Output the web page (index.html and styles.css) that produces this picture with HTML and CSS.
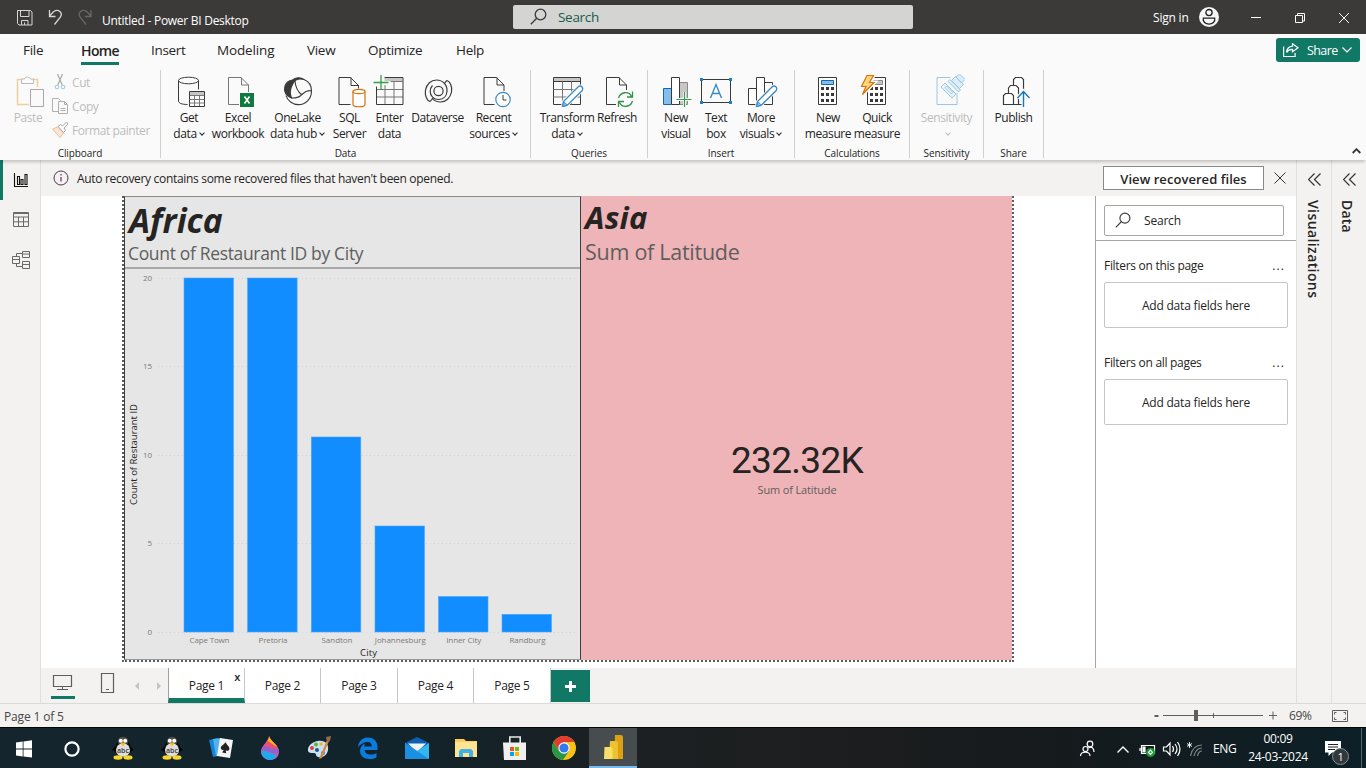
FILE: index.html
```html
<!DOCTYPE html>
<html lang="en">
<head>
<meta charset="utf-8">
<title>Untitled - Power BI Desktop</title>
<link rel="stylesheet" href="styles.css">
</head>
<body>
<header class="titlebar">
  <svg class="quick" width="96" height="34" viewBox="0 0 96 34" fill="none" stroke="#d6d6d4">
    <path d="M17.500 10.500h13l1.500 1.500v13h-13l-1.500-1.500zM20.500 10.500v6h8.500v-6M21.500 25v-4.500h6.500V25M24.500 22.500v2.500"/>
    <path d="M49.500 10v6.500h6M49.500 16l4-4.200c5-3.500 9.500 1 7 5.200l-6 7.500" stroke-width="1.300"/>
    <path d="M91 10v6.500h-6M91 16l-4-4.200c-5-3.500-9.500 1-7 5.200l6 7.500" stroke="#686765" stroke-width="1.300"/>
  </svg>
  <span class="doc-title">Untitled - Power BI Desktop</span>
  <div class="top-search">
    <svg width="18" height="18" viewBox="0 0 18 18" fill="none" stroke="#3b3a38" stroke-width="1.300"><circle cx="10.500" cy="6.500" r="5.300"/><path d="M6.700 10.300L.8 16.200"/></svg>
    <span>Search</span>
  </div>
  <span class="signin">Sign in</span>
  <svg class="avatar" width="20" height="20" viewBox="0 0 20 20"><circle cx="10" cy="10" r="10" fill="#f6f6f6"/><g fill="none" stroke="#222" stroke-width="1.300"><circle cx="10" cy="5.600" r="3.100"/><path d="M4.300 11.200h11.400c.8 3.800-2.200 5.900-5.700 5.900s-6.500-2.100-5.700-5.900z"/></g></svg>
  <svg class="winctl" width="114" height="34" viewBox="1246 0 114 34" fill="none" stroke="#fff"><path d="M1251 17.500h10M1295.500 15.500h7v7h-7zM1297.500 15v-1.500h7v7.500h-1.500M1339 13l10 10M1349 13l-10 10"/></svg>
</header>

<nav class="menu">
  <span class="m-file">File</span><span class="m-home on">Home</span><span class="m-insert">Insert</span><span class="m-model">Modeling</span><span class="m-view">View</span><span class="m-opt">Optimize</span><span class="m-help">Help</span>
  <button class="share">
    <svg width="16" height="14" viewBox="0 0 16 14" fill="none" stroke="#fff" stroke-width="1.200"><path d="M.6 3.500v10h11.500V10M9.500.8l5.500 4-5.500 4V6.400C7 6.300 5 7.200 3.600 9.500 3.800 6 6 3.400 9.500 3.100z"/></svg>
    <span>Share</span>
    <svg width="10" height="6" viewBox="0 0 10 6" fill="none" stroke="#fff" stroke-width="1.200"><path d="M.5.5L5 5 9.500.5"/></svg>
  </button>
</nav>

<section class="ribbon">
  <div class="group g-clip">
    <div class="tools">
      <div class="tool w-paste off">
        <svg viewBox="10 74 36 36" fill="none"><path d="M23 79.500h-5.500V104.500H29" stroke="#f0cf9c" stroke-width="1.500"/><path d="M32 79.500h5.500V87" stroke="#f0cf9c" stroke-width="1.500"/><path d="M21.500 83.500v-4.500h3c0-2.500 6-2.500 6 0h3v4.500z" fill="#fafafa" stroke="#bcbbba"/><path d="M30.500 89.500h13v17h-13z" fill="#fafafa" stroke="#a9a8a7"/></svg>
        <span>Paste</span>
      </div>
      <ul class="clip-list">
        <li><svg width="18" height="18" viewBox="52 74 18 18" fill="none"><path d="M57.500 75l4.700 11M62.500 75l-4.700 11" stroke="#a9a8a7" stroke-width="1.200"/><circle cx="57" cy="88" r="1.800" stroke="#9cc9e2"/><circle cx="63" cy="88" r="1.800" stroke="#9cc9e2"/></svg>Cut</li>
        <li><svg width="18" height="18" viewBox="52 97 18 18" fill="none" stroke="#b0afae"><path d="M58 111.500h-5.500v-13h6l2 2v1"/><path d="M58.500 101.500h6l3 3v9h-9zM64.500 101.500v3h3M60.500 108.500h5M60.500 110.500h5" fill="#fafafa"/></svg>Copy</li>
        <li><svg width="18" height="18" viewBox="52 121 18 18" fill="none" stroke="#a9a8a7"><path d="M52.500 129l5-2 6 6-3.500 4.500z" fill="#fbe5d4" stroke="#e9bd98"/><path d="M58 126.500l5.500 6 2-2-1.500-2.500 4-4-1.500-2-4 4-2-1.500z" fill="#fafafa"/></svg>Format painter</li>
      </ul>
    </div>
    <h3>Clipboard</h3>
  </div>

  <div class="group g-data">
    <div class="tools">
      <div class="tool w46">
        <svg viewBox="171 74 36 36" fill="none" stroke="#3b3a39"><ellipse cx="188.500" cy="80.500" rx="10" ry="3.300"/><path d="M178.500 80.500v20.500c0 2 3 3.500 9 3.500M198.500 80.500v9"/><path d="M189.500 91.500h15v15h-15z" fill="#fff"/><path d="M190 92h14v3h-14z" fill="#c8c6c4" stroke="none"/><path d="M189.500 95.500h15M189.500 99.500h15M189.500 103h15M194.500 95v11M199.500 95v11" stroke="#777"/></svg>
        <span>Get<br>data<i class="chev"></i></span></div>
      <div class="tool w52">
        <svg viewBox="220 74 36 36" fill="none" stroke="#777"><path d="M239 104.500h-10.500v-27H241l7.500 7.500v7M241.500 77.500v7.500h7"/><path d="M240 93h14v14h-14z" fill="#10793f" stroke="none"/><path d="M244.500 96.500l5 7M249.500 96.500l-5 7" stroke="#fff" stroke-width="1.600"/></svg>
        <span>Excel<br>workbook</span></div>
      <div class="tool w67">
        <svg viewBox="279.500 74 36 36" fill="none" stroke="#3b3a39" stroke-width="1.100"><path d="M292 80a7 4.500 0 0 1 11.500-.5c-4-1-8.500-1-11 4-3 5-3.500 10-1.500 14.500-6-2-8-7-6.500-12 1-3.500 4-5.500 7.500-6z" fill="#3b3a39"/><path d="M303.500 79.500c5 2 7.500 6.500 7.500 11.500 0 8-6 13.600-13 13.600-6 0-11-4-12.500-9"/><path d="M291 98c6 0 8-1 11-4s6-4 9-3M294.500 81c.5 7 3 11 7 14"/></svg>
        <span>OneLake<br>data hub<i class="chev"></i></span></div>
      <div class="tool w37">
        <svg viewBox="331.500 74 36 36" fill="none" stroke="#3b3a39"><path d="M350 104.500h-11.500v-27H350l8 8v3M350.500 77.500v8h8"/><path d="M352.500 91.500v13c0 3 12 3 12 0v-13" fill="#fff" stroke="#d8700f" stroke-width="1.200"/><ellipse cx="358.500" cy="91.500" rx="6" ry="2.200" fill="#fff" stroke="#d8700f" stroke-width="1.200"/></svg>
        <span>SQL<br>Server</span></div>
      <div class="tool w43">
        <svg viewBox="371.500 74 36 36" fill="none" stroke="#3b3a39"><path d="M384 78h18v3h-18z" fill="#c8c6c4" stroke="none"/><path d="M384.500 85v19.500M393.500 81.500v23M376 89.500h26.500M376 97h26.500M390 81.500h12" stroke="#777"/><path d="M384 77.500h18.500v27h-26.500v-18"/><path d="M373 82.500h15M380.500 75v15" stroke="#2ea043" stroke-width="1.300"/></svg>
        <span>Enter<br>data</span></div>
      <div class="tool w53">
        <svg viewBox="419.500 74 36 36" fill="none" stroke="#3b3a39" stroke-width="1.200"><circle cx="438" cy="91" r="4.600"/><path d="M429.500 101.500c-3-1-5.500-6-4.500-11.500 1.200-6 5.500-10 11-10 6.500 0 11 5 10.500 11.500-.4 5-4 8-8.500 8-4.800 0-8.300-3.500-8.300-8.300 0-2 .8-4 2.300-5.700"/><path d="M446.500 80.500c3 1 5.500 6 4.500 11.500-1.200 6-5.500 10-11 10-3.500 0-6-1-8-3.500-1 1.500-1.500 2.500-2.500 3M444 83.500c1-1.500 1.500-2.500 2.500-3"/></svg>
        <span>Dataverse</span></div>
      <div class="tool w59">
        <svg viewBox="475.500 74 36 36" fill="none" stroke="#3b3a39"><path d="M494 104.500h-10.500v-27H496l7.500 7.500v6M496.500 77.500v7.500h7"/><circle cx="502.500" cy="99.500" r="7.200" fill="#fff" stroke="#3a8ac6" stroke-width="1.200"/><path d="M502.500 95v5h3.500"/></svg>
        <span>Recent<br>sources<i class="chev"></i></span></div>
    </div>
    <h3>Data</h3>
  </div>

  <div class="group g-query">
    <div class="tools">
      <div class="tool w58">
        <svg viewBox="549 74 36 36" fill="none" stroke="#3b3a39"><path d="M553.500 77.500h27v27h-27zM553.500 81.500h27"/><path d="M554 78h26v3h-26z" fill="#c8c6c4" stroke="none"/><path d="M553.500 89.500h27M553.500 97h27M562.500 81.500v23M571.500 81.500v23" stroke="#777"/><path d="M562.500 106.500l1-5 14.500-14.500c3-2.500 6 .5 4 3.800L567 105.500z" fill="#fafafa" stroke="#fafafa" stroke-width="3"/><path d="M562.500 106.500l1-5 14.500-14.500c3-2.500 6 .5 4 3.800L567 105.500z" fill="#fff" stroke="#3a8ac6" stroke-width="1.300"/><path d="M562.500 106.500l1.200-5 3.500 3.500z" fill="#83beec" stroke="#3a8ac6"/></svg>
        <span>Transform<br>data<i class="chev"></i></span></div>
      <div class="tool w42">
        <svg viewBox="599 74 36 36" fill="none" stroke="#3b3a39"><path d="M616 104.500h-9.500v-27H619l7.500 7.500v5M619.500 77.500v7.500h7"/><g stroke="#2f9148" stroke-width="1.300"><path d="M618.500 98c2-6.500 10.500-7 13-1.500M632.500 91.500v5.500h-5.500M632.500 101c-2 6.500-10.500 7-13 1.500M618.500 107v-5.500h5.500"/></g></svg>
        <span>Refresh</span></div>
    </div>
    <h3>Queries</h3>
  </div>

  <div class="group g-insert">
    <div class="tools">
      <div class="tool w40">
        <svg viewBox="658 74 36 36" fill="none" stroke="#3b3a39"><path d="M679.500 82.500h8v22h-8z" fill="#c8c6c4" stroke="#8a8886"/><path d="M663.500 88.500h8v16h-8z" fill="#83beec" stroke="#1068b0"/><path d="M671.500 77.500h8v27h-8z" fill="#fff"/><path d="M676.500 99.500h15M684.500 92v15" stroke="#fafafa" stroke-width="3"/><path d="M676.500 99.500h15M684.500 92v15" stroke="#2ea043" stroke-width="1.200"/></svg>
        <span>New<br>visual</span></div>
      <div class="tool w40">
        <svg viewBox="698 74 36 36" fill="none"><path d="M701.500 79.500h29v23h-29z" stroke="#3b3a39"/><path d="M700 78h3v3h-3zM729 78h3v3h-3zM700 101h3v3h-3zM729 101h3v3h-3z" fill="#1482cf"/><path d="M710.500 98l5.500-13.500 5.500 13.500M712.300 93.500h7.400" stroke="#3a8ac6" stroke-width="1.400"/></svg>
        <span>Text<br>box</span></div>
      <div class="tool w50">
        <svg viewBox="743 74 36 36" fill="none" stroke="#3b3a39"><path d="M748.500 88.500h8v16h-8zM756.500 77.500h8v27h-8zM764.500 82.500h8v22h-8z" fill="#fff"/><path d="M756.500 106.500l1-5 14.500-14.500c3-2.500 6 .5 4 3.800L761 105.500z" stroke="#fafafa" stroke-width="3"/><path d="M756.500 106.500l1-5 14.500-14.500c3-2.500 6 .5 4 3.800L761 105.500z" fill="#fff" stroke="#3a8ac6" stroke-width="1.300"/><path d="M756.500 106.500l1.200-5 3.500 3.500z" fill="#83beec" stroke="#3a8ac6"/></svg>
        <span>More<br>visuals<i class="chev"></i></span></div>
    </div>
    <h3>Insert</h3>
  </div>

  <div class="group g-calc">
    <div class="tools">
      <div class="tool w48">
        <svg viewBox="810 74 36 36" fill="none"><path d="M818.500 77.500h18v27h-18z" fill="#fff" stroke="#3b3a39"/><path d="M821.500 80.500h12v4h-12z" fill="#83beec" stroke="#1068b0"/><path d="M821 87h3v3h-3zM826 87h3v3h-3zM831 87h3v3h-3zM821 93h3v3h-3zM826 93h3v3h-3zM831 93h3v3h-3zM821 99h3v3h-3zM826 99h3v3h-3zM831 99h3v3h-3z" fill="#3b3a39"/></svg>
        <span>New<br>measure</span></div>
      <div class="tool w50">
        <svg viewBox="859 74 36 36" fill="none"><path d="M867.500 77.500h18v27h-18z" fill="#fff" stroke="#3b3a39"/><path d="M871.500 80.500h11v4h-11z" fill="#c8c6c4" stroke="#8a8886"/><path d="M870 87h3v3h-3zM875 87h3v3h-3zM880 87h3v3h-3zM870 93h3v3h-3zM875 93h3v3h-3zM880 93h3v3h-3zM870 99h3v3h-3zM875 99h3v3h-3zM880 99h3v3h-3z" fill="#3b3a39"/><path d="M867 75.500h6.500l-4 7h4.500L862.500 94.500l3.500-8h-4.500z" fill="#fafafa" stroke="#fafafa" stroke-width="4"/><path d="M867 75.500h6.500l-4 7h4.500L862.500 94.500l3.500-8h-4.500z" fill="#ffd67c" stroke="#d8700f" stroke-width="1.200"/></svg>
        <span>Quick<br>measure</span></div>
    </div>
    <h3>Calculations</h3>
  </div>

  <div class="group g-sens">
    <div class="tools">
      <div class="tool w55 off">
        <svg viewBox="928.500 74 36 36" fill="none" stroke="#9dc8e3"><path d="M950 77.500h-13.500v27h20V93"/><path d="M940.500 87l4-4 11 11-4 4zM944.500 87.500l1.500-1.500 6.500 6.500-1.500 1.500z" fill="#e8f3fa"/><path d="M947.500 81.500l2-2 10.500 10.500-2 2zM951 80.500l4-4 8 8-4 4zM955.500 77l3.500-3 5.500 5.500-3.500 3.500z" fill="#dcedf7"/></svg>
        <span>Sensitivity<br><i class="chev"></i></span></div>
    </div>
    <h3>Sensitivity</h3>
  </div>

  <div class="group g-share">
    <div class="tools">
      <div class="tool w55">
        <svg viewBox="995 74 36 36" fill="#fff" stroke="#3b3a39" stroke-width="1.200"><path d="M1012.500 104.500v-25l2-2h6l2 2v25z"/><path d="M1007.500 104.500v-16.500l2-2.500h5.500l2.500 2.500v16.500z"/><path d="M1002.500 104.500v-9l2-2h6l2 2v9z"/><path d="M1022.500 107V92M1016.500 98l6-6.500 6 6.500" fill="none" stroke="#fafafa" stroke-width="4"/><path d="M1022.500 107V92M1016.500 98l6-6.500 6 6.500" fill="none" stroke="#1478be" stroke-width="1.400"/></svg>
        <span>Publish</span></div>
    </div>
    <h3>Share</h3>
  </div>
  <svg class="collapse" width="9" height="6" viewBox="0 0 9 6" fill="none" stroke="#333" stroke-width="1.800"><path d="M.7 5L4.500 1.200 8.300 5"/></svg>
</section>

<div class="workspace">
  <aside class="rail">
    <svg width="40" height="120" viewBox="0 160 40 120" fill="none">
      <path d="M0 160h3v40H0z" fill="#117865"/>
      <path d="M14.500 173v13.500H28M17.500 176.500h2v8h-2zM21 179.500h2v5h-2zM25 174.500h2v10h-2z" stroke="#111" stroke-width="1.100"/>
      <path d="M13.500 212.500h15v14h-15zM13.500 213.500h15M13.500 217h15M13.500 221.800h15M18.500 217v9.500M23.500 217v9.500" stroke="#6a6968"/>
      <path d="M12.500 256.500h7v7h-7zM12.500 259.500h7M22.500 251.500h7v6h-7zM22.500 254h7M22.500 261.500h7v7h-7zM22.500 264.500h7M16.500 256v-2.500h6M16.500 264v2.500h6" stroke="#6a6968"/>
    </svg>
  </aside>

  <main class="center">
    <div class="notice">
      <svg width="16" height="16" viewBox="0 0 16 16" fill="none" stroke="#4b3a50"><circle cx="8" cy="8" r="7"/><path d="M8 7v4.500M8 4v1.500" stroke="#7a1f7a" stroke-width="1.200"/></svg>
      <span class="notice-text">Auto recovery contains some recovered files that haven't been opened.</span>
      <button class="recover">View recovered files</button>
      <svg width="12" height="12" viewBox="0 0 12 12" fill="none" stroke="#333"><path d="M.5.5l11 11M11.500.5l-11 11"/></svg>
    </div>
    <div class="stage">
      <div class="canvas">
        <div class="report">
          <article class="africa">
            <div class="heading">
              <h1>Africa</h1>
              <h2>Count of Restaurant ID by City</h2>
            </div>
            <svg class="chart" width="455" height="390" viewBox="125 269 455 390">
              <g stroke="#d3d3d3" stroke-dasharray="1 3"><path d="M158 278.500h420M158 366.500h420M158 455.500h420M158 543.500h420M158 632.500h420"/></g>
              <g fill="#118dff" stroke="#4aa5fb" stroke-width=".6">
                <rect x="184" y="278" width="49.500" height="354"/><rect x="247.600" y="278" width="49.500" height="354"/><rect x="311.300" y="437" width="49.500" height="195"/><rect x="375" y="526" width="49.500" height="106"/><rect x="438.500" y="596.500" width="49.500" height="35.500"/><rect x="502" y="614.300" width="49.500" height="17.700"/>
              </g>
              <g class="axis" text-anchor="end"><text x="152" y="281" textLength="9">20</text><text x="152" y="369" textLength="9">15</text><text x="152" y="458" textLength="9">10</text><text x="152" y="546" textLength="4.500">5</text><text x="152" y="635" textLength="4.500">0</text></g>
              <g class="axis" text-anchor="middle"><text x="209.500" y="643" textLength="40">Cape Town</text><text x="273" y="643" textLength="29">Pretoria</text><text x="337" y="643" textLength="31">Sandton</text><text x="400.300" y="643" textLength="51">Johannesburg</text><text x="463.700" y="643" textLength="35">Inner City</text><text x="527.500" y="643" textLength="36">Randburg</text></g>
              <text class="axis-title" x="368.500" y="656" text-anchor="middle" textLength="17">City</text>
              <text class="axis-title" transform="translate(137 454.500) rotate(-90)" text-anchor="middle" textLength="101">Count of Restaurant ID</text>
            </svg>
          </article>
          <article class="asia">
            <h1>Asia</h1>
            <h2>Sum of Latitude</h2>
            <div class="kpi"><strong>232.32K</strong><span>Sum of Latitude</span></div>
          </article>
        </div>
      </div>
      <aside class="filters">
        <div class="fsearch"><div class="fbox">
          <svg width="17" height="17" viewBox="0 0 18 18" fill="none" stroke="#3b3a38" stroke-width="1.200"><circle cx="10.500" cy="6.500" r="5.300"/><path d="M6.700 10.300L.8 16.200"/></svg><span>Search</span></div></div>
        <div class="fhead"><span>Filters on this page</span><b>...</b></div>
        <div class="drop">Add data fields here</div>
        <div class="fhead second"><span>Filters on all pages</span><b>...</b></div>
        <div class="drop">Add data fields here</div>
      </aside>
    </div>
    <div class="tabs">
      <svg class="views" width="127" height="35" viewBox="41 668 127 35" fill="none" stroke="#605e5c"><path d="M53.500 675.500h18v11h-18z" stroke-width="1.200"/><path d="M62.500 687v2.500M57 689.500h11"/><path d="M101.500 673.500h12v19h-12z" stroke-width="1.200"/><path d="M106 689.500h3"/><path d="M51 696h24v3H51z" fill="#117865" stroke="none"/><path d="M139 682v8l-4-4zM157 682v8l4-4z" fill="#c5c3c1" stroke="none"/></svg>
      <div class="tab t-on">Page 1<i>x</i></div><div class="tab">Page 2</div><div class="tab t77">Page 3</div><div class="tab">Page 4</div><div class="tab t77">Page 5</div>
      <div class="add"><svg width="11" height="11" viewBox="0 0 11 11"><path d="M4 0h3v4h4v3H7v4H4V7H0V4h4z" fill="#fff"/></svg></div>
    </div>
  </main>

  <aside class="pane p-vis"><svg width="14" height="13" viewBox="0 0 14 13" fill="none" stroke="#333" stroke-width="1.200"><path d="M6.500.5l-6 6 6 6M12.500.5l-6 6 6 6"/></svg><span>Visualizations</span></aside>
  <aside class="pane p-data"><svg width="14" height="13" viewBox="0 0 14 13" fill="none" stroke="#333" stroke-width="1.200"><path d="M6.500.5l-6 6 6 6M12.500.5l-6 6 6 6"/></svg><span>Data</span></aside>
</div>

<div class="status">
  <span class="pg">Page 1 of 5</span>
  <svg width="124" height="23" viewBox="1154 704 124 23" fill="none" stroke="#605e5c"><path d="M1154.500 716h4" stroke-width="2"/><path d="M1163 715.500h100M1213.500 713v5M1269 715.500h8M1273 711.500v8"/><path d="M1194 710h4v11h-4z" fill="#605e5c" stroke="none"/></svg>
  <span class="pct">69%</span>
  <svg width="16" height="12" viewBox="0 0 16 12" fill="none" stroke="#605e5c"><path d="M.5.5h15v11H.5z"/><path d="M2.500 4.500v-2h2M11.500 2.500h2v2M2.500 7.500v2h2M11.500 9.500h2v-2"/></svg>
</div>

<footer class="taskbar">
  <svg class="start" width="97" height="41" viewBox="0 727 97 41"><path d="M16 741.500l6.700-1v7H16zM23.500 740.400l8.500-1.200v8.300h-8.500zM16 748.400h6.700v7l-6.700-1zM23.500 748.400H32v8.200l-8.500-1.200z" fill="#fff"/><circle cx="72" cy="748" r="6.600" fill="none" stroke="#fff" stroke-width="2.200"/></svg>
  <div class="app"><svg class="penguin" viewBox="0 0 24 24"><path d="M6 9L1 14l4 2zM18 9l5 5-4 2z" fill="#050505"/><ellipse cx="12" cy="12.500" rx="8" ry="9" fill="#0b0b0b"/><ellipse cx="12" cy="5.500" rx="5.200" ry="4.800" fill="#4a4a4a"/><circle cx="9.800" cy="4.800" r="2" fill="#fff"/><circle cx="14.200" cy="4.800" r="2" fill="#fff"/><ellipse cx="12" cy="14" rx="7" ry="6.800" fill="#dededc"/><path d="M9.500 6.500h5L12 10.500z" fill="#f6b918"/><ellipse cx="7" cy="21.500" rx="4.500" ry="2.200" fill="#f7d72c"/><ellipse cx="17" cy="21.500" rx="4.500" ry="2.200" fill="#f7d72c"/><text x="12" y="17" text-anchor="middle">abc</text></svg></div>
  <div class="app"><svg class="penguin" viewBox="0 0 24 24"><path d="M6 9L1 14l4 2zM18 9l5 5-4 2z" fill="#050505"/><ellipse cx="12" cy="12.500" rx="8" ry="9" fill="#0b0b0b"/><ellipse cx="12" cy="5.500" rx="5.200" ry="4.800" fill="#4a4a4a"/><circle cx="9.800" cy="4.800" r="2" fill="#fff"/><circle cx="14.200" cy="4.800" r="2" fill="#fff"/><ellipse cx="12" cy="14" rx="7" ry="6.800" fill="#dededc"/><path d="M9.500 6.500h5L12 10.500z" fill="#f6b918"/><ellipse cx="7" cy="21.500" rx="4.500" ry="2.200" fill="#f7d72c"/><ellipse cx="17" cy="21.500" rx="4.500" ry="2.200" fill="#f7d72c"/><text x="12" y="17" text-anchor="middle">abc</text></svg></div>
  <div class="app"><svg viewBox="0 0 24 24"><path d="M0 4l9-2v18l-5 1z" fill="#1683d8"/><path d="M4 3l8-1v18H7z" fill="#4db4ef"/><path d="M11 2l13 2-3 18-13-2z" fill="#f4f4f4"/><path d="M16.500 6c1 3 4.500 4.500 3.800 7.200-.5 1.800-2.500 2-3.600 1l.5 3-4-.6 1.600-2.800c-1.400.6-3-.2-3-2 .1-2.400 4-3.300 4.700-5.800z" fill="#222"/></svg></div>
  <div class="app"><svg viewBox="0 0 24 24"><path d="M11 0c1 5 10 9 10 15.500S16 24 12 24s-9-3-9-8.500S10 6 11 0z" fill="#e0529c"/><path d="M11 0c1 4 6 7 8.500 11-4-1-7-5-10-6C10.500 3.500 11 2 11 0z" fill="#fbb915"/><path d="M9.500 5C7.500 8 4.500 11 3.500 14c5-3 9 3 17 1-1-5-6-6-11-10z" fill="#ee4f6e"/><path d="M6 10c4-1 8 5 14.500 2.500l.5 4c-6 3-11-3-17.500-2z" fill="#8d63d4"/><path d="M3.200 15c6-1 10 4 16 3.500-1.500 4-4 5.500-7.200 5.500s-9-2.500-8.800-9z" fill="#22a8ec"/></svg></div>
  <div class="app"><svg viewBox="0 0 24 24"><path d="M11 5c7-1 11 3 10 9s-6 8-10 7c-3-1-1-4-4-4-4 0-6.500 0-6-4 .6-4 5-7.500 10-8z" fill="#c9e3f6"/><circle cx="5" cy="12" r="2" fill="#e4413a"/><circle cx="9" cy="8.500" r="2" fill="#5cb531"/><circle cx="14" cy="8" r="1.800" fill="#f2b521"/><circle cx="10" cy="14" r="2" fill="#23567e"/><circle cx="16" cy="17" r="2" fill="#3688cf"/><path d="M20 4l2 1-7 17-3 1z" fill="#d58a3d"/><path d="M19 1l5-1-1 5-3 1z" fill="#9b6a45"/></svg></div>
  <div class="app"><svg viewBox="0 0 24 24"><path d="M2 11C3 4 7 1.500 12 1.500c6 0 9.500 4 9.500 9.500v3H8.500c.5 3 3 4.500 6 4.500 2.500 0 4.500-.7 6-1.600v4.600c-2 1-4.500 1.500-7 1.500C8 23 4 20 4 15c0-3.500 2-6 5-7.500-.5 1-.8 2-.8 3h7.600c0-3-1.500-4.500-4.300-4.500C8 6 4.500 8 2 11z" fill="#0b7bdc"/></svg></div>
  <div class="app"><svg viewBox="0 0 24 24"><path d="M0 7l12-6 12 6-12 9z" fill="#0d5fb6"/><path d="M3 7.500h18L12 16z" fill="#f1f1f1"/><path d="M0 7l12 8L24 7v16H0z" fill="#35b5f0"/><path d="M0 7l24 16H0z" fill="#1b8fe2"/></svg></div>
  <div class="app"><svg viewBox="0 0 24 24"><path d="M1 3h9l2 2h11v16H1z" fill="#f9cf5a"/><path d="M1 6h22v15H1z" fill="#fde493"/><path d="M5 21v-6l2-2h10l2 2v6h-4v-4H9v4z" fill="#3eb1e6"/></svg></div>
  <div class="app"><svg viewBox="0 0 24 24"><path d="M6.800 7V1h10.400v6" fill="none" stroke="#e9e9e9" stroke-width="1.600"/><path d="M0 6.500h23V24H1z" fill="#f0f0f0"/><path d="M7 11h4v4H7z" fill="#f25022"/><path d="M12 11h4v4h-4z" fill="#7fba00"/><path d="M7 16h4v4H7z" fill="#00a4ef"/><path d="M12 16h4v4h-4z" fill="#ffb900"/></svg></div>
  <div class="app"><svg viewBox="0 0 24 24"><circle cx="12" cy="12" r="12" fill="#fbc116"/><path d="M1.600 6A12 12 0 0 1 22.400 6H12l-5 9z" fill="#e33b2e"/><path d="M1.600 6A12 12 0 0 0 11 24l6-9H7z" fill="#279847"/><circle cx="12" cy="12" r="5.700" fill="#fff"/><circle cx="12" cy="12" r="4.600" fill="#3179ee"/></svg></div>
  <div class="app active"><svg viewBox="0 0 24 24"><path d="M14 0h6.500L22 1.500V24h-9z" fill="#dca012"/><path d="M9 6h6.500L17 7.500V24H8z" fill="#eec22e"/><path d="M3.500 12H10l1.500 1.500V24H3z" fill="#f8df68"/></svg></div>

  <svg class="tray" width="150" height="41" viewBox="1060 727 150 41" fill="none" stroke="#fff" stroke-width="1.200"><circle cx="1090" cy="743" r="2.800"/><path d="M1088.500 747c3-2 5.500 0 5.500 4"/><circle cx="1085.500" cy="748" r="2.500"/><path d="M1080.500 755c0-5 9.500-5 9.500 0"/><path d="M1117.500 751.500l5.500-5.500 5.500 5.500" stroke-width="1.400"/><path d="M1141.500 744.500h13v8h-13zM1140 747v3"/><path d="M1143 746h2v5h-2z" fill="#fff"/><circle cx="1150.500" cy="751.500" r="4.500" fill="#149a2d" stroke="none"/><path d="M1150.500 749l2 2.500-2 2-2-2z"/><path d="M1163.500 746h3l3.500-4v12l-3.500-4h-3z"/><path d="M1172.500 745q2 3 0 6M1175 743q4 5 0 10M1177.500 741q5 7 0 14"/><path d="M1189.500 741v6M1187 742.500l5 3M1192 742.500l-5 3" stroke-width=".9"/><g stroke="#7d8588"><path d="M1190.500 755q2-11 11.500-11M1194 755q2-8 8-8M1197.500 755q1-5 4.500-5"/></g></svg>
  <span class="lang">ENG</span>
  <div class="clock"><span>00:09</span><span>24-03-2024</span></div>
  <svg class="action" width="42" height="41" viewBox="1320 727 42 41"><path d="M1325 740h16v11.500h-9l-3.500 3.500v-3.500h-3.500z" fill="#fff"/><path d="M1328 743.500h10M1328 746h10M1328 748.500h7" stroke="#1a2327"/><circle cx="1340.500" cy="755.500" r="8" fill="#30383b" stroke="#8a9093"/><text x="1340.500" y="759.500" text-anchor="middle" fill="#fff">1</text><path d="M1361.500 727v41" stroke="#59646a"/></svg>
</footer>
</body>
</html>
```
FILE: styles.css
```css
* { box-sizing: border-box; }
body { margin: 0; width: 1366px; height: 768px; overflow: hidden; display: flex; flex-direction: column; font-family: "Open Sans", "Noto Sans", sans-serif; font-size: 12px; letter-spacing: -0.3px; color: #252423; background: #fff; }
h1, h2, h3, ul { margin: 0; padding: 0; font-weight: 400; list-style: none; }
svg { display: block; flex: none; }
span { white-space: nowrap; }
button { font: inherit; letter-spacing: inherit; }

.titlebar { height: 34px; flex: none; display: flex; align-items: center; background: #3b3a38; color: #fff; }
.doc-title { width: 411px; padding: 6px 0 0 6px; letter-spacing: -0.27px; }
.top-search { width: 400px; height: 24px; margin-left: 6px; padding-left: 17px; display: flex; align-items: center; gap: 10px; border-radius: 2px; background: #d4d4d2; color: #185a4c; font-size: 13.5px; }
.signin { width: 46px; margin-left: 240px; letter-spacing: -0.2px; }
.winctl { margin-left: auto; margin-right: 6px; }

.menu { height: 36px; flex: none; display: flex; align-items: flex-start; padding-top: 4px; background: #fafafa; font-size: 13.5px; line-height: 25px; }
.menu > span { height: 27px; }
.m-file { margin-left: 23px; width: 58px; }
.m-home { width: 38px; font-weight: 600; font-size: 14px; border-bottom: 3px solid #117865; margin-right: 32px; letter-spacing: -0.6px; }
.m-insert { width: 66px; }
.m-model { width: 90px; letter-spacing: -0.15px; }
.m-view { width: 61px; }
.m-opt { width: 88px; }
.share { margin-left: auto; margin-right: 6px; width: 84px; height: 24px; border: 0; border-radius: 3px; padding: 0 8px 0 7px; background: #117865; color: #fff; display: flex; align-items: center; font-size: 12.5px; letter-spacing: -0.6px; }
.share span { margin: 0 4px 0 8px; }

.ribbon { height: 90px; flex: none; display: flex; background: #fafafa; position: relative; z-index: 1; box-shadow: 0 3px 3px -1px rgba(0,0,0,.2); letter-spacing: -0.42px; }
.group { height: 88px; border-right: 1px solid #d2d0ce; display: flex; flex-direction: column; }
.group h3 { font-size: 10px; line-height: 13px; height: 11px; text-align: center; letter-spacing: -0.08px; }
.tools { height: 77px; padding-top: 4px; display: flex; }
.tool { display: flex; flex-direction: column; align-items: center; text-align: center; line-height: 16px; }
.tool svg { width: 36px; height: 36px; }
.tool span { width: max-content; }
.off { color: #bdbcbb; }
.chev { display: inline-block; width: 4px; height: 4px; margin: 0 1px 3px 3px; border: solid currentColor; border-width: 0 1.500px 1.500px 0; transform: rotate(45deg); }
.g-clip { width: 161px; } .g-data { width: 370px; } .g-query { width: 117px; } .g-insert { width: 147px; }
.g-calc { width: 115px; } .g-sens { width: 74px; } .g-share { width: 60px; }
.g-data .tools { padding-left: 5px; } .g-query .tools { padding-left: 7px; } .g-insert .tools { padding-left: 8px; }
.g-calc .tools { padding-left: 9px; } .g-sens .tools { padding-left: 9px; } .g-share .tools { padding-left: 2px; }
.g-clip .tools { padding-left: 10px; }
.w-paste { width: 36px; } .w37 { width: 37px; } .w40 { width: 40px; } .w42 { width: 42px; } .w43 { width: 43px; }
.w46 { width: 46px; } .w48 { width: 48px; } .w50 { width: 50px; } .w52 { width: 52px; } .w53 { width: 53px; }
.w55 { width: 55px; } .w58 { width: 58px; } .w59 { width: 59px; } .w67 { width: 67px; }
.clip-list { color: #bdbcbb; margin: -4px 0 0 6px; white-space: nowrap; }
.clip-list li { height: 24px; display: flex; align-items: center; gap: 2px; }
.collapse { margin: 78px 5px 0 auto; }

.workspace { height: 543px; flex: none; display: flex; background: #f3f2f1; }
.rail { width: 41px; border-right: 1px solid #e1dfdd; }
.center { width: 1255px; display: flex; flex-direction: column; }
.notice { height: 36px; display: flex; align-items: center; padding-left: 12px; }
.notice-text { width: 1034px; padding-left: 8px; padding-top: 1px; letter-spacing: -0.31px; }
.recover { width: 161px; height: 24px; background: #fff; border: 1px solid #8a8886; font-weight: 600; font-size: 13px; color: #252423; padding: 1px 0 0; margin-right: 10px; letter-spacing: 0.05px; }
.stage { height: 472px; display: flex; background: #fff; }
.canvas { width: 1054px; padding-left: 81px; }
.report { width: 892px; height: 466px; display: flex; border: 2px dotted #5c5c5c; border-top: 0; }
.africa { width: 457px; background: #e6e6e6; border: 1px solid #3e3e3e; border-top-color: #8a8a8a; border-bottom-color: #999; }
.heading { height: 72px; border-bottom: 2px solid #a8a8a8; padding-left: 4px; }
.africa h1, .asia h1 { font-weight: 700; font-style: italic; color: #252423; letter-spacing: 0; }
.africa h1 { font-size: 33.500px; line-height: 47px; }
.africa h2 { font-size: 17.500px; line-height: 19px; color: #605e5c; letter-spacing: -0.34px; margin-left: -1px; }
.axis { font-size: 8px; fill: #7c7a78; letter-spacing: 0; }
.axis-title { font-size: 9.500px; fill: #252423; letter-spacing: 0; }
.asia { width: 431px; background: #efb4b8; padding-left: 4px; }
.asia h1 { font-size: 31px; line-height: 43px; letter-spacing: 0.2px; }
.asia h2 { font-size: 21.500px; line-height: 26px; color: #605e5c; letter-spacing: -0.27px; }
.kpi { margin-top: 173px; padding-right: 3px; display: flex; flex-direction: column; align-items: center; font-size: 11px; line-height: 11px; color: #605e5c; letter-spacing: -0.15px; }
.kpi strong { font-weight: 400; font-family: Roboto, sans-serif; font-size: 37px; line-height: 46px; color: #252423; letter-spacing: -0.7px; }
.filters { width: 201px; border-left: 1px solid #a8a6a4; letter-spacing: -0.2px; }
.fsearch { height: 45px; border-bottom: 1px solid #a8a6a4; padding: 9px 0 0 8px; }
.fbox { width: 180px; height: 31px; border: 1px solid #a8a6a4; border-radius: 2px; padding-left: 10px; display: flex; align-items: center; gap: 12px; }
.fhead { height: 41px; padding: 8px 11px 0 8px; display: flex; justify-content: space-between; line-height: 34px; font-size: 12px; letter-spacing: -0.3px; }
.fhead b { font-weight: 400; letter-spacing: 1.100px; }
.second { height: 51px; padding-top: 18px; }
.drop { width: 184px; height: 46px; margin-left: 8px; border: 1px solid #c8c6c4; border-radius: 2px; display: flex; align-items: center; justify-content: center; padding-top: 1px; }
.tabs { height: 35px; display: flex; }
.tab { width: 76px; height: 35px; background: #fff; border-right: 1px solid #c8c6c4; text-align: center; line-height: 35px; }
.t77 { width: 77px; }
.t-on { width: 77px; border-left: 1px solid #a19f9d; border-bottom: 5px solid #117865; position: relative; }
.t-on i { position: absolute; right: 4px; top: -1px; font-style: normal; font-size: 11px; font-weight: 600; line-height: 19px; }
.add { width: 39px; height: 32px; margin-top: 2px; background: #117865; display: flex; align-items: center; justify-content: center; }
.pane { width: 35px; border-left: 1px solid #e1dfdd; padding: 13px 0 0 11px; }
.pane span { display: block; writing-mode: vertical-rl; font-size: 14px; font-weight: 600; line-height: 18px; margin: 14px 0 0 -5px; letter-spacing: 0.2px; }
.p-vis span { letter-spacing: 0.4px; margin-left: -4px; }

.status { height: 24px; flex: none; display: flex; align-items: center; background: #f3f2f1; border-top: 1px solid #dcdad8; color: #484644; padding: 0 18px 0 4px; }
.pg { margin-right: auto; padding-top: 2px; letter-spacing: -0.15px; }
.pct { width: 43px; padding-left: 11px; margin-right: 11px; }
.taskbar { height: 41px; flex: none; display: flex; align-items: center; background: linear-gradient(90deg, #15252d 0, #11242b 28%, #1b2022 45%, #1d1e1f 60%, #151a1d 78%, #0c2027 100%); border-top: 1px solid #050505; color: #fff; }
.start { margin-right: 1px; }
.app { width: 49px; height: 40px; display: flex; align-items: center; justify-content: center; }
.app svg { width: 24px; height: 24px; }
.penguin text { font-size: 7px; font-weight: 600; fill: #333; letter-spacing: 0; }
.active { width: 48px; margin-left: 1px; background: #474d4f; border-bottom: 2px solid #76b9ed; }
.tray { margin-left: auto; }
.lang { margin-left: 3px; width: 28px; }
.clock { width: 74px; display: flex; flex-direction: column; align-items: center; line-height: 18px; }
.action { margin: 0 4px 0 5px; font-size: 11px; }
```
